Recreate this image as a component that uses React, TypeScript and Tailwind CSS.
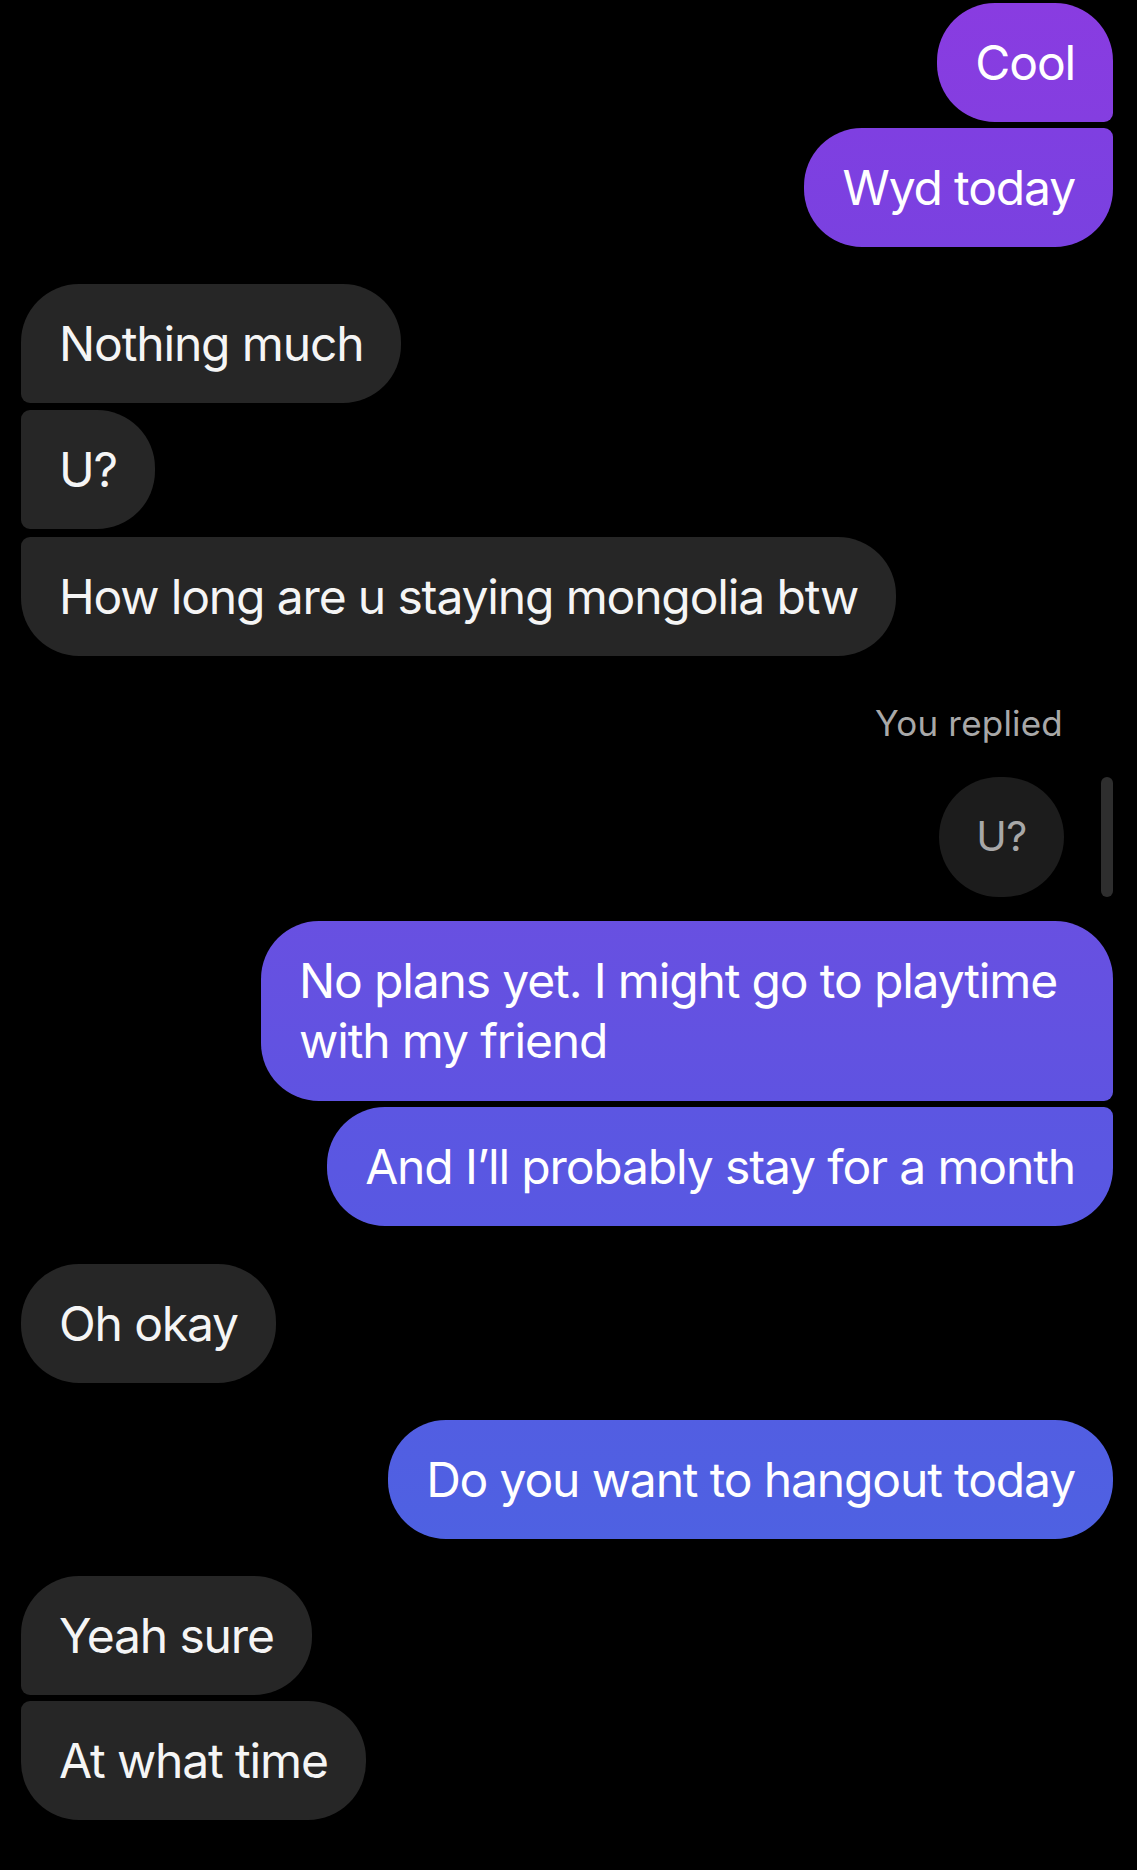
import React from "react";

type Side = "in" | "out";

interface Msg {
  text: React.ReactNode;
  side: Side;
  corners: string;
  bg?: string;
  mt?: string;
  extra?: string;
}

const messages: Msg[] = [
  { text: "Cool", side: "out", corners: "rounded-[58px] rounded-br-[9px]", bg: "bg-[linear-gradient(180deg,#893ce1,#843ee0)]", mt: "mt-0" },
  { text: "Wyd today", side: "out", corners: "rounded-[58px] rounded-tr-[9px]", bg: "bg-[linear-gradient(180deg,#7f3fe1,#7a41e0)]", mt: "mt-[6px]" },
  { text: "Nothing much", side: "in", corners: "rounded-[58px] rounded-bl-[9px]", mt: "mt-[37px]" },
  { text: "U?", side: "in", corners: "rounded-[58px] rounded-tl-[9px] rounded-bl-[9px]", mt: "mt-[7px]" },
  { text: "How long are u staying mongolia btw", side: "in", corners: "rounded-[58px] rounded-tl-[9px]", mt: "mt-[8px]" },
];

const after: Msg[] = [
  {
    text: (
      <>
        No plans yet. I might go to playtime
        <br />
        with my friend
      </>
    ),
    side: "out",
    corners: "rounded-[58px] rounded-br-[9px]",
    bg: "bg-[linear-gradient(180deg,#6850e1,#5f53e1)]",
    mt: "mt-[24px]",
    extra: "pr-[56px] pb-[30px]",
  },
  { text: "And I\u2019ll probably stay for a month", side: "out", corners: "rounded-[58px] rounded-tr-[9px]", bg: "bg-[linear-gradient(180deg,#5c56e2,#5858e2)]", mt: "mt-[6px]" },
  { text: "Oh okay", side: "in", corners: "rounded-[58px]", mt: "mt-[38px]" },
  { text: "Do you want to hangout today", side: "out", corners: "rounded-[58px]", bg: "bg-[linear-gradient(180deg,#525ee2,#4e61e2)]", mt: "mt-[37px]" },
  { text: "Yeah sure", side: "in", corners: "rounded-[58px] rounded-bl-[9px]", mt: "mt-[37px]" },
  { text: "At what time", side: "in", corners: "rounded-[58px] rounded-tl-[9px]", mt: "mt-[6px]" },
];

function Bubble({ m }: { m: Msg }) {
  const isOut = m.side === "out";
  return (
    <div className={`flex ${isOut ? "justify-end" : "justify-start"} ${m.mt}`}>
      <div
        className={`max-w-[900px] px-[38px] pt-[30px] pb-[29px] text-[48px] leading-[60px] tracking-[-1.15px] ${m.corners} ${
          isOut ? `${m.bg} text-white` : "bg-[#262626] text-[#f5f5f5]"
        } ${m.extra ?? ""}`}
      >
        {m.text}
      </div>
    </div>
  );
}

export default function App() {
  return (
    <div className="min-h-[1870px] bg-black pt-[3px] pl-[21px] pr-[24px] font-['Inter','Roboto',sans-serif]">
      {messages.map((m, i) => (
        <Bubble key={i} m={m} />
      ))}

      {/* Reply preview */}
      <div className="mt-[47px] flex justify-end pr-[50px]">
        <span className="text-[35px] leading-[40px] tracking-[0.2px] text-[#a8a8a8]">You replied</span>
      </div>
      <div className="mt-[34px] flex justify-end gap-[37px]">
        <div className="flex h-[120px] w-[125px] items-center justify-center rounded-full bg-[#1c1c1c] text-[41px] tracking-[-0.5px] text-[#a8a8a8]">
          U?
        </div>
        <div className="w-[12px] rounded-full bg-[#2e2e2e]" />
      </div>

      {after.map((m, i) => (
        <Bubble key={i} m={m} />
      ))}
    </div>
  );
}
